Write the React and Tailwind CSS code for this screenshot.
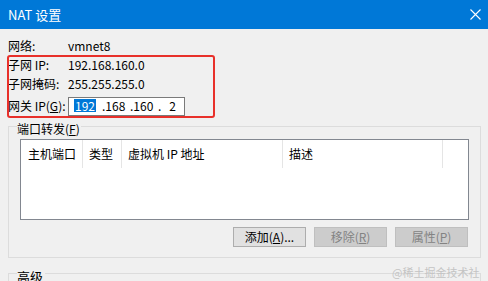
export default function App() {
  const font = { fontFamily: '"Noto Sans CJK SC", "Noto Sans", sans-serif' };
  return (
    <div
      className="relative w-[488px] h-[281px] overflow-hidden bg-[#f0f0f0] text-black text-[12px] leading-[16px]"
      style={font}
    >
      {/* title bar */}
      <div className="h-[29px] bg-[#0078d7] flex items-center justify-between pl-[8px] pr-[7px]">
        <span className="text-white text-[13px]">NAT 设置</span>
        <svg width="11" height="11" viewBox="0 0 11 11" className="block">
          <path d="M0.5 0.5 L10.5 10.5 M10.5 0.5 L0.5 10.5" stroke="#ffffff" strokeWidth="1.1" fill="none" />
        </svg>
      </div>

      {/* info rows */}
      <div className="pl-[8px] pt-[8px] flex flex-col">
        <div className="flex h-[18px] items-center">
          <span className="w-[60px]">网络:</span>
          <span>vmnet8</span>
        </div>
        <div className="flex h-[19px] items-center">
          <span className="w-[60px]">子网 IP:</span>
          <span>192.168.160.0</span>
        </div>
        <div className="flex h-[19px] items-center">
          <span className="w-[60px]">子网掩码:</span>
          <span>255.255.255.0</span>
        </div>
        <div className="flex h-[26px] items-center">
          <span className="w-[60px]">
            网关 IP(<span className="underline">G</span>):
          </span>
          <div className="w-[117px] h-[19px] border border-[#7a7a7a] bg-white flex items-center pl-[5px]">
            <span className="w-[25px]">
              <span className="bg-[#0078d7] text-white px-[1px] leading-[13px] inline-block">192</span>
            </span>
            <span className="w-[28px] pl-[3px]">.168</span>
            <span className="w-[28px] pl-[3px]">.160</span>
            <span className="pl-[3px]">.</span>
            <span className="pl-[8px]">2</span>
          </div>
        </div>
      </div>

      {/* port forwarding group */}
      <div className="relative mt-[7px] ml-[8px] w-[473px] h-[132px] border border-[#dcdcdc] pt-[12px] px-[11px]">
        <span className="absolute left-[8px] -top-[6px] bg-[#f0f0f0] pr-[1px]">
          端口转发(<span className="underline">F</span>)
        </span>
        <div className="h-[81px] border border-[#828790] bg-white">
          <div className="flex h-[28px]">
            <div className="w-[62px] border-r border-[#e5e5e5] pl-[7px] flex items-center">主机端口</div>
            <div className="w-[39px] border-r border-[#e5e5e5] pl-[6px] flex items-center">类型</div>
            <div className="w-[161px] border-r border-[#e5e5e5] pl-[6px] flex items-center">虚拟机 IP 地址</div>
            <div className="w-[160px] border-r border-[#e5e5e5] pl-[6px] flex items-center">描述</div>
          </div>
        </div>
        <div className="flex justify-end gap-[8px] mt-[7px] pr-[1px]">
          <div className="w-[73px] h-[20px] border border-[#adadad] bg-[#e1e1e1] flex items-center justify-center">
            添加(<span className="underline">A</span>)...
          </div>
          <div className="w-[73px] h-[20px] border border-[#bfbfbf] bg-[#cccccc] text-[#838383] flex items-center justify-center">
            移除(<span className="underline">R</span>)
          </div>
          <div className="w-[73px] h-[20px] border border-[#bfbfbf] bg-[#cccccc] text-[#838383] flex items-center justify-center">
            属性(<span className="underline">P</span>)
          </div>
        </div>
      </div>

      {/* advanced group */}
      <div className="relative mt-[15px] ml-[8px] w-[473px] h-[40px] border border-[#dcdcdc]">
        <span className="absolute left-[8px] -top-[5px] bg-[#f0f0f0] pr-[2px] text-[13px]">高级</span>
      </div>

      {/* red annotation box */}
      <div className="absolute left-[7px] top-[55px] w-[208px] h-[63px] border-2 border-[#e8302a] rounded-[3px]" />

      {/* watermark */}
      <div className="absolute left-[392px] top-[265px] text-[11px] leading-[14px] text-[#c4c4c4]">@稀土掘金技术社区</div>
    </div>
  );
}
